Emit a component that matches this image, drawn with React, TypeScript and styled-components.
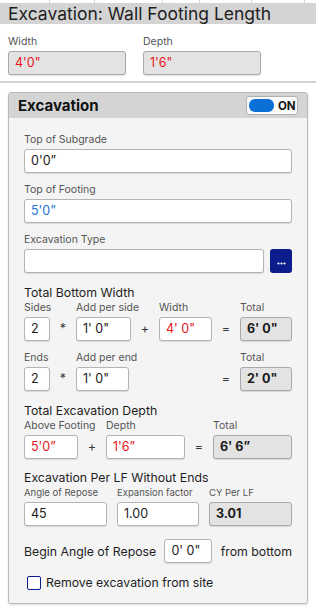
import React from "react";
import styled, { createGlobalStyle } from "styled-components";

const Global = createGlobalStyle`
  body {
    margin: 0;
    background: #ffffff;
    font-family: Inter, "Noto Sans", sans-serif;
    color: #1a1a1a;
  }
  * { box-sizing: border-box; }
`;

const Page = styled.div`
  width: 316px;
  height: 614px;
  overflow: hidden;
  background: #fff;
`;

const TabStrip = styled.div`
  height: 3px;
  display: flex;
`;

const TabStub = styled.div<{ w: number }>`
  width: ${(p) => p.w}px;
  border-right: 1px solid #d6d6d6;
`;

const TitleBar = styled.div`
  height: 21px;
  background: #d4d4d4;
  padding-left: 8px;
  font-size: 17.5px;
  line-height: 21px;
  color: #1e1e1e;
  white-space: nowrap;
`;

const TopFields = styled.div`
  display: flex;
  gap: 17px;
  padding: 11px 8px 0 8px;
  height: 59px;
  border-bottom: 2px solid #d2d2d2;
`;

const Field = styled.div<{ w?: number }>`
  display: flex;
  flex-direction: column;
  width: ${(p) => (p.w ? `${p.w}px` : "auto")};
  flex-shrink: 0;
`;

const Label = styled.div<{ size?: number }>`
  font-size: ${(p) => p.size ?? 10.5}px;
  color: #555;
  height: 16px;
  line-height: 14px;
  white-space: nowrap;
`;

const Box = styled.div<{ w?: number; ro?: boolean; tone?: string; bold?: boolean }>`
  height: 24px;
  width: ${(p) => (p.w ? `${p.w}px` : "100%")};
  border: 1px solid ${(p) => (p.ro ? "#a9a9a9" : "#b4b4b4")};
  border-radius: 3px;
  background: ${(p) => (p.ro ? "#e3e3e3" : "#ffffff")};
  box-shadow: 0 1px 1px rgba(0, 0, 0, 0.12);
  padding: 0 0 0 6px;
  font-size: 12.5px;
  line-height: 22px;
  font-weight: ${(p) => (p.bold ? 700 : 400)};
  color: ${(p) => p.tone ?? "#1a1a1a"};
  white-space: nowrap;
`;

const GrowBox = styled(Box)`
  flex: 1;
`;

const Panel = styled.div`
  margin: 9px 8px 0 8px;
  border: 1px solid #b9b9b9;
  border-radius: 3px;
  background: #f4f4f4;
  height: 512px;
  box-shadow: 0 1px 2px rgba(0, 0, 0, 0.15);
  overflow: hidden;
`;

const PanelHead = styled.div`
  height: 25px;
  background: #d4d4d4;
  display: flex;
  align-items: center;
  justify-content: space-between;
  padding: 0 9px 0 9px;
`;

const PanelTitle = styled.div`
  font-size: 15px;
  font-weight: 700;
  color: #111;
`;

const Toggle = styled.div`
  width: 52px;
  height: 19px;
  border: 1px solid #b0b0b0;
  border-radius: 3px;
  background: #fafafa;
  display: flex;
  align-items: center;
  padding-left: 2px;
  gap: 4px;
`;

const Knob = styled.div`
  width: 25px;
  height: 13px;
  border-radius: 6px;
  background: #0a6fd6;
`;

const ToggleText = styled.span`
  font-size: 11.5px;
  font-weight: 700;
  color: #111;
`;

const Body = styled.div`
  padding: 15px 15px 0 15px;
  display: flex;
  flex-direction: column;
`;

const Block = styled.div<{ mb?: number }>`
  display: flex;
  flex-direction: column;
  margin-bottom: ${(p) => p.mb ?? 10}px;
`;

const Row = styled.div<{ gap?: number; mt?: number }>`
  display: flex;
  align-items: flex-end;
  gap: ${(p) => p.gap ?? 6}px;
  margin-top: ${(p) => p.mt ?? 0}px;
`;

const Op = styled.div<{ w: number }>`
  width: ${(p) => p.w}px;
  height: 24px;
  line-height: 24px;
  text-align: center;
  font-size: 12.5px;
  color: #333;
  flex-shrink: 0;
`;

const Spacer = styled.div`
  flex: 1;
`;

const Section = styled.div<{ mt?: number }>`
  font-size: 12.3px;
  color: #1e1e1e;
  height: 17px;
  line-height: 17px;
  margin-top: ${(p) => p.mt ?? 0}px;
  white-space: nowrap;
`;

const DotsButton = styled.div`
  width: 22px;
  height: 24px;
  border-radius: 3px;
  background: #0b1c8c;
  display: flex;
  align-items: center;
  justify-content: center;
  padding-top: 4px;
  flex-shrink: 0;
`;

const Inline = styled.div`
  display: flex;
  align-items: center;
  justify-content: space-between;
  font-size: 12.3px;
  color: #1e1e1e;
  margin-top: 13px;
  white-space: nowrap;
`;

const CheckRow = styled.div`
  display: flex;
  align-items: center;
  gap: 5px;
  margin: 12px 0 0 3px;
  font-size: 12.3px;
  color: #1e1e1e;
`;

const Check = styled.div`
  width: 14px;
  height: 14px;
  border: 1.5px solid #0b1c8c;
  border-radius: 2px;
  background: #fff;
`;

const App = () => {
  return (
    <Page>
      <Global />
      <TabStrip>
        {[50, 45, 68, 37, 52, 53].map((w, i) => (
          <TabStub key={i} w={w} />
        ))}
      </TabStrip>
      <TitleBar>Excavation: Wall Footing Length</TitleBar>
      <TopFields>
        <Field w={118}>
          <Label>Width</Label>
          <Box ro tone="#e8141a">4'0"</Box>
        </Field>
        <Field w={118}>
          <Label>Depth</Label>
          <Box ro tone="#e8141a">1'6"</Box>
        </Field>
      </TopFields>

      <Panel>
        <PanelHead>
          <PanelTitle>Excavation</PanelTitle>
          <Toggle>
            <Knob />
            <ToggleText>ON</ToggleText>
          </Toggle>
        </PanelHead>
        <Body>
          <Block>
            <Label>Top of Subgrade</Label>
            <Box>0'0”</Box>
          </Block>
          <Block>
            <Label>Top of Footing</Label>
            <Box tone="#1a73d0">5'0”</Box>
          </Block>
          <Block mb={11}>
            <Label>Excavation Type</Label>
            <Row gap={6}>
              <GrowBox />
              <DotsButton>
                <svg width="9" height="3" viewBox="0 0 9 3">
                  <circle cx="1.5" cy="1.5" r="1.1" fill="#fff" />
                  <circle cx="4.5" cy="1.5" r="1.1" fill="#fff" />
                  <circle cx="7.5" cy="1.5" r="1.1" fill="#fff" />
                </svg>
              </DotsButton>
            </Row>
          </Block>

          <Section>Total Bottom Width</Section>
          <Row gap={0}>
            <Field w={26}>
              <Label>Sides</Label>
              <Box>2</Box>
            </Field>
            <Op w={26}>*</Op>
            <Field w={55}>
              <Label>Add per side</Label>
              <Box>1' 0"</Box>
            </Field>
            <Op w={28}>+</Op>
            <Field w={53}>
              <Label>Width</Label>
              <Box tone="#e8141a">4' 0"</Box>
            </Field>
            <Op w={28}>=</Op>
            <Field w={52}>
              <Label>Total</Label>
              <Box ro bold>6' 0"</Box>
            </Field>
          </Row>
          <Row gap={0} mt={10}>
            <Field w={26}>
              <Label>Ends</Label>
              <Box>2</Box>
            </Field>
            <Op w={26}>*</Op>
            <Field w={53}>
              <Label>Add per end</Label>
              <Box>1' 0"</Box>
            </Field>
            <Spacer />
            <Op w={28}>=</Op>
            <Field w={52}>
              <Label>Total</Label>
              <Box ro bold>2' 0"</Box>
            </Field>
          </Row>

          <Section mt={11}>Total Excavation Depth</Section>
          <Row gap={0}>
            <Field w={54}>
              <Label>Above Footing</Label>
              <Box tone="#e8141a">5'0”</Box>
            </Field>
            <Op w={28}>+</Op>
            <Field w={79}>
              <Label>Depth</Label>
              <Box tone="#e8141a">1'6”</Box>
            </Field>
            <Op w={28}>=</Op>
            <Field w={79}>
              <Label>Total</Label>
              <Box ro bold>6' 6”</Box>
            </Field>
          </Row>

          <Section mt={10}>Excavation Per LF Without Ends</Section>
          <Row gap={10}>
            <Field w={83}>
              <Label size={9.5}>Angle of Repose</Label>
              <Box>45</Box>
            </Field>
            <Field w={82}>
              <Label size={9.5}>Expansion factor</Label>
              <Box>1.00</Box>
            </Field>
            <Field w={83}>
              <Label size={9.5}>CY Per LF</Label>
              <Box ro bold>3.01</Box>
            </Field>
          </Row>

          <Inline>
            <span>Begin Angle of Repose</span>
            <Box w={48}>0' 0"</Box>
            <span>from bottom</span>
          </Inline>

          <CheckRow>
            <Check />
            <span>Remove excavation from site</span>
          </CheckRow>
        </Body>
      </Panel>
    </Page>
  );
};

export default App;
